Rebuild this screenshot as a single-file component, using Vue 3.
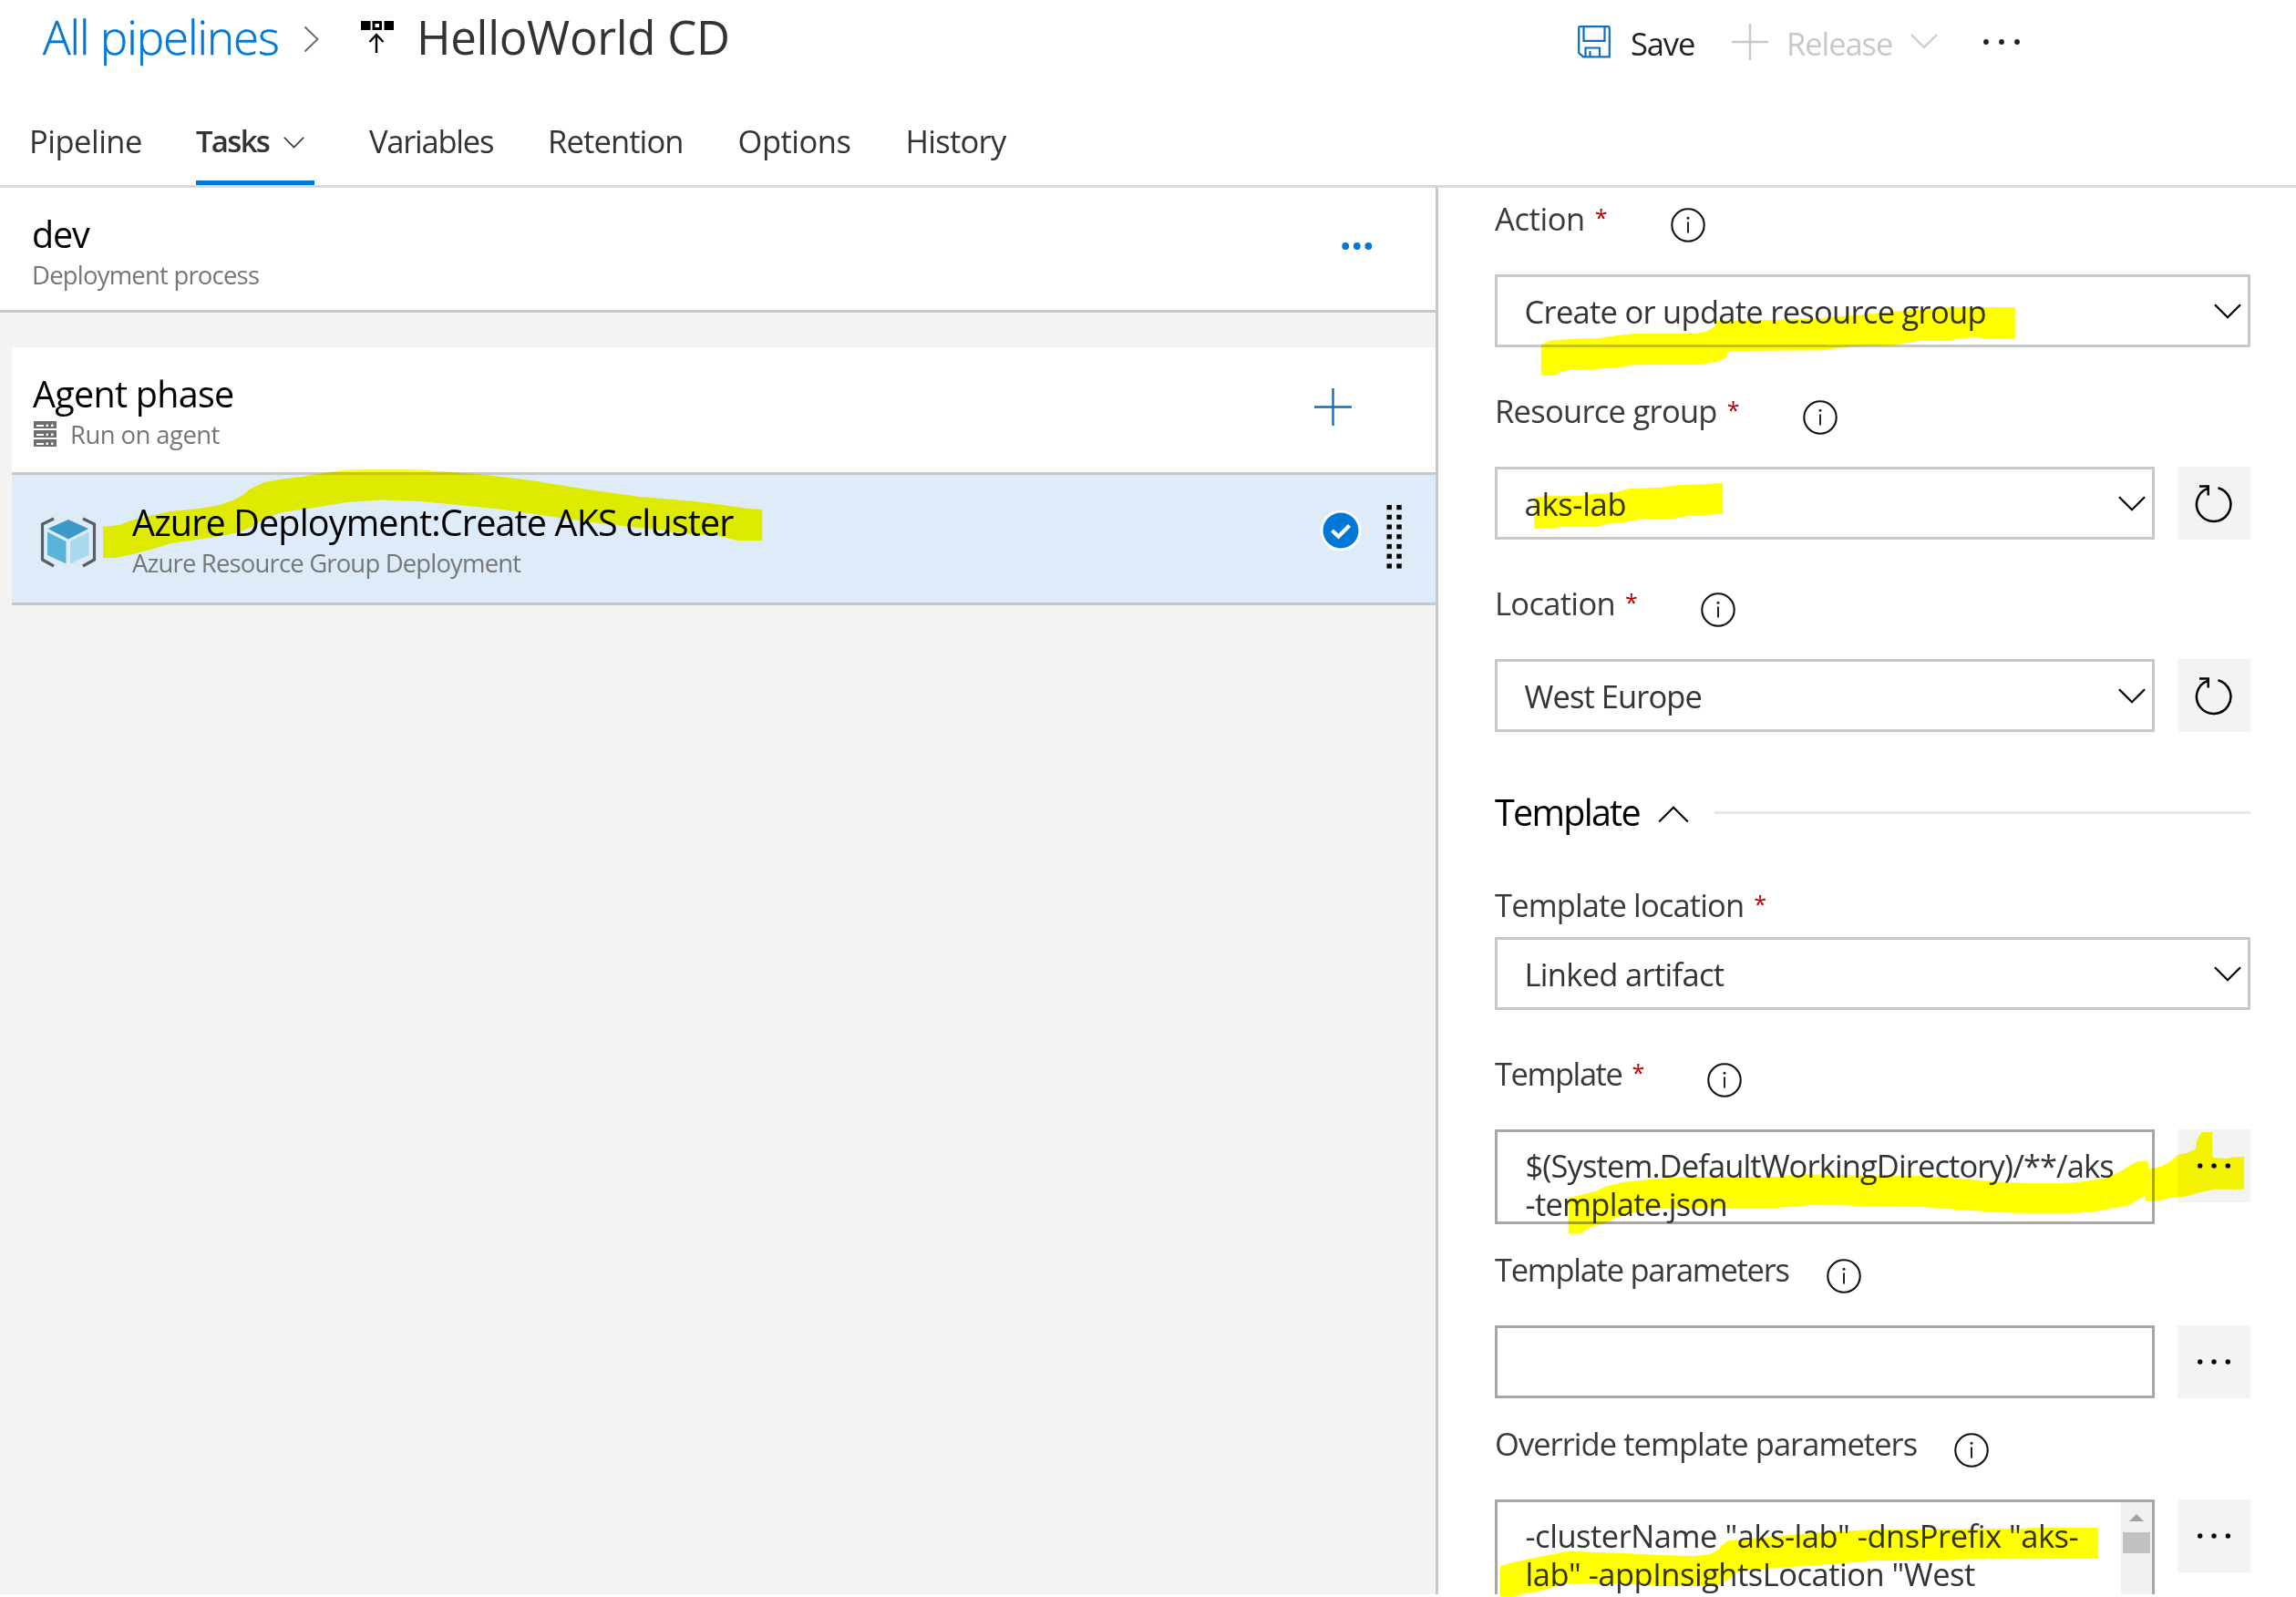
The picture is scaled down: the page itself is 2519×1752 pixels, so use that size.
<script setup>
const tabs = [
  { label: 'Pipeline', ls: -0.5 },
  { label: 'Tasks', ls: -1.7, active: true },
  { label: 'Variables', ls: -1.24 },
  { label: 'Retention', ls: -0.88 },
  { label: 'Options', ls: -0.5 },
  { label: 'History', ls: -0.7 },
]

const inputs = [
  { label: 'Action', ls: -0.42, required: true, info: true, kind: 'select', value: 'Create or update resource group', vls: -0.72, space: 95 },
  { label: 'Resource group', ls: -0.72, required: true, info: true, kind: 'select', value: 'aks-lab', vls: -0.29, action: 'refresh', space: 131 },
  { label: 'Location', ls: -0.68, required: true, info: true, kind: 'select', value: 'West Europe', vls: -0.92, action: 'refresh', space: 131 },
]

const templateInputs = [
  { label: 'Template location', ls: -0.87, required: true, tight: true, kind: 'select', value: 'Linked artifact', vls: -0.7, space: 60 },
  { label: 'Template', ls: -1.45, required: true, info: true, kind: 'text', lines: [['$(System.DefaultWorkingDirectory)/**/aks', -0.9], ['-template.json', -0.72]], action: 'more', space: 131 },
  { label: 'Template parameters', ls: -1.28, info: true, kind: 'text', lines: [], action: 'more', space: 111 },
  { label: 'Override template parameters', ls: -0.96, info: true, kind: 'text', scroll: true, lines: [['-clusterName "aks-lab" -dnsPrefix "aks-', -0.48], ['lab" -appInsightsLocation "West', -0.5]], action: 'more', space: 111 },
]

const groups = [
  { id: 'general', fields: inputs },
  { id: 'template', title: 'Template', fields: templateInputs },
]
</script>

<template>
  <div class="page">
    <header class="top">
      <div class="titlebar">
        <div class="crumbs">
          <a class="root">All pipelines</a>
          <svg class="sep" width="18" height="30" viewBox="0 0 18 30"><path d="M1.5 1.5 L15.5 15 L1.5 28.5" fill="none" stroke="#666" stroke-width="1.8" /></svg>
          <svg class="release-icon" width="36" height="36" viewBox="0 0 36 36">
            <path d="M0 0h10.500v10H0zM25.500 0h10.500v10H25.500z" />
            <path d="M14 1.500h7.500v7H14z" fill="none" stroke="#000" stroke-width="3" />
            <path d="M17 35V15.500M9.500 23l7.500-8 7.500 8" fill="none" stroke="#000" stroke-width="2.400" />
          </svg>
          <span class="name">HelloWorld CD</span>
        </div>
        <div class="commands">
          <svg class="save-icon" width="36" height="36" viewBox="0 0 36 36" fill="none" stroke="#106ebe" stroke-width="2.200">
            <path d="M2.500 1.200H33.500Q34.800 1.200 34.800 2.500V34.300H6L1.200 30V2.500Q1.200 1.200 2.500 1.200Z" />
            <path d="M6.500 1.500V16.800H29.500V1.500M8.500 34.500V24.500H24V34.500M13.500 34V28" />
          </svg>
          <span class="save">Save</span>
          <svg class="plus" width="40" height="40" viewBox="0 0 40 40"><path d="M20 0V40M0 20H40" stroke="#c8c8c8" stroke-width="2.400" /></svg>
          <span class="release">Release</span>
          <svg class="down" width="30" height="17" viewBox="0 0 30 17"><path d="M1 1L15 15L29 1" fill="none" stroke="#c8c8c8" stroke-width="2" /></svg>
          <svg class="dots" width="42" height="8" viewBox="0 0 42 8" fill="#222"><circle cx="4" cy="4" r="2.900" /><circle cx="21" cy="4" r="2.900" /><circle cx="38" cy="4" r="2.900" /></svg>
        </div>
      </div>
      <nav class="tabs">
        <div v-for="t in tabs" :key="t.label" class="tab" :class="{ active: t.active }">
          <span :style="{ letterSpacing: t.ls + 'px' }">{{ t.label }}</span>
          <svg v-if="t.active" width="23" height="13" viewBox="0 0 23 13"><path d="M.8 .8L11.5 11.5L22.2 .8" fill="none" stroke="#333" stroke-width="1.6" /></svg>
        </div>
      </nav>
    </header>

    <main class="work">
      <section class="left">
        <div class="process">
          <div class="text">
            <div class="h dev">dev</div>
            <div class="s proc">Deployment process</div>
          </div>
          <svg class="more" width="34" height="8" viewBox="0 0 34 8" fill="#0078d7"><circle cx="4.200" cy="4" r="3.900" /><circle cx="16.800" cy="4" r="3.900" /><circle cx="29.300" cy="4" r="3.900" /></svg>
        </div>
        <div class="cards">
          <div class="phase">
            <div class="text">
              <div class="h agent">Agent phase</div>
              <div class="s run">
                <svg width="25" height="28" viewBox="0 0 25 28">
                  <g v-for="y in [0, 10, 20]" :key="y"><path :d="`M0 ${y}h25v8H0z`" fill="#6e6e6e" /><path :d="`M3 ${y + 4}h8v2H3zM13.5 ${y + 3.5}h2.5v2.5h-2.5zM19 ${y + 3.5}h2.5v2.5H19z`" fill="#fff" /></g>
                </svg>
                <span>Run on agent</span>
              </div>
            </div>
            <svg class="add" width="41" height="41" viewBox="0 0 41 41"><path d="M20.500 0V41M0 20.500H41" stroke="#106ebe" stroke-width="2.400" /></svg>
          </div>
          <div class="task">
            <svg class="cube" width="62" height="56" viewBox="0 0 62 56">
              <path d="M15 2L2.500 8V47L15 54M47 2L59.500 8V47L47 54" fill="none" stroke="#5a5f66" stroke-width="3.200" />
              <path d="M31 3L53 13L31 24.500L8.500 13z" fill="#3d99c8" />
              <path d="M8 16.500L28.500 27V51.500L8 42z" fill="#59b4d9" />
              <path d="M53.500 16.500L33 27V51.500L53.500 42z" fill="#a9d9ee" />
            </svg>
            <div class="text">
              <div class="h azure">Azure Deployment:Create AKS cluster</div>
              <div class="s group">Azure Resource Group Deployment</div>
            </div>
            <svg class="check" width="46" height="46" viewBox="0 0 46 46"><circle cx="23" cy="23" r="22.500" fill="#fff" /><circle cx="23" cy="23" r="19.500" fill="#0078d7" /><path d="M13.500 23L20.500 29.500L32.500 17.500" fill="none" stroke="#fff" stroke-width="4.200" /></svg>
            <svg class="grip" width="18" height="70" viewBox="0 0 18 70">
              <g v-for="n in 7" :key="n"><rect x=".5" :y="(n - 1) * 10.73" width="5.400" height="5.200" /><rect x="11.300" :y="(n - 1) * 10.73" width="5.400" height="5.200" /></g>
            </svg>
          </div>
        </div>
      </section>

      <section class="right">
        <template v-for="g in groups" :key="g.id">
          <div v-if="g.title" class="group-head">
            <span>{{ g.title }}</span>
            <svg width="34" height="19" viewBox="0 0 34 19"><path d="M1.200 17.500L17 1.800L32.800 17.500" fill="none" stroke="#000" stroke-width="2.200" /></svg>
            <i class="rule"></i>
          </div>
          <div v-for="f in g.fields" :key="f.label" class="field">
            <div class="label" :class="{ tight: f.tight }" :style="{ height: f.space + 'px' }">
              <span class="name" :style="{ letterSpacing: f.ls + 'px' }">{{ f.label }}</span>
              <span v-if="f.required" class="star">*</span>
              <svg v-if="f.info" class="info" :class="{ near: !f.required }" width="38" height="38" viewBox="0 0 38 38"><circle cx="19" cy="19" r="17.700" fill="none" stroke="#111" stroke-width="2.100" /><path d="M19 15.500V27.500" stroke="#222" stroke-width="2" /><circle cx="19" cy="11.300" r="1.500" fill="#222" /></svg>
            </div>
            <div class="control">
              <div v-if="f.kind === 'select'" class="box select">
                <span :style="{ letterSpacing: f.vls + 'px' }">{{ f.value }}</span>
                <svg width="30" height="17" viewBox="0 0 30 17"><path d="M1 1.200L15 15.200L29 1.200" fill="none" stroke="#000" stroke-width="2.300" /></svg>
              </div>
              <div v-else class="box area" :class="{ tall: f.lines.length, scroll: f.scroll }">
                <div class="lines"><div v-for="[line, ls] in f.lines" :key="line" :style="{ letterSpacing: ls + 'px' }">{{ line }}</div></div>
                <div v-if="f.scroll" class="bar"><i class="arrow"></i><i class="thumb"></i></div>
              </div>
              <div v-if="f.action" class="btn">
                <svg v-if="f.action === 'refresh'" width="42" height="44" viewBox="0 0 42 44" fill="none" stroke="#000" stroke-width="2.500"><path d="M25.500 4.200A18.700 18.700 0 1 1 14 4.800M5 2.500H14.700V12.500" /></svg>
                <svg v-else class="ell" width="38" height="8" viewBox="0 0 38 8"><circle cx="3.700" cy="4" r="2.700" /><circle cx="19" cy="4" r="2.700" /><circle cx="34.300" cy="4" r="2.700" /></svg>
              </div>
            </div>
          </div>
        </template>
      </section>
    </main>

    <!-- highlighter strokes laid over the page -->
    <svg class="marker" width="2519" height="1752" viewBox="0 0 2519 1752" fill="#ff0">
      <path transform="translate(0 200) scale(.5357 .3333)" d="M211 1133L245 1128 268 1113 349 1083 410 1073 450 1062 480 1045 500 1027 511 1010 540 988 575 977 615 970 650 960 700 948 740 944H835L910 952 1000 964 1090 982 1200 1010 1310 1035 1400 1047 1450 1055 1530 1073 1561 1077V1179H1510L1470 1163 1410 1157 1340 1142 1240 1125 1120 1098 1030 1077 940 1062 860 1050 780 1045 710 1053 640 1072 580 1085 545 1103 520 1130 490 1152 440 1168 350 1188 310 1208 270 1225 235 1236H211Z" />
      <path transform="translate(1600 200) scale(.5861 .3333)" d="M155 535L170 522 182 519 208 516 265 512 300 503 330 498 447 497 465 490 480 475 481 455 600 453 680 447 720 440 780 432 830 423 890 417 920 411H1042V514H985L965 510 935 514 920 521 860 522 825 533 810 537 735 540 680 553 505 555 502 575 485 590 455 599 325 601 305 608 250 616 208 618 195 622 180 635H155Z" />
      <path transform="translate(1600 200) scale(.5861 .3333)" d="M142 1038L165 1032H230L255 1024H285L320 1008 380 1004 410 997 470 992 495 990V1091L430 1098 405 1106 340 1109 310 1119 275 1125 262 1133H195L170 1139H142Z" />
      <path transform="translate(1600 940) scale(.5861 .3333)" d="M206 1123L230 1112 258 1100 275 1085 310 1070 370 1060 420 1053H590L650 1045 720 1047 760 1050H860L900 1053 960 1063 1020 1070 1060 1074H1140L1180 1066 1210 1058 1240 1035 1258 1015 1272 1002H1291L1292 1026 1315 1020 1335 1000 1345 982 1365 974 1380 962 1382 935 1387 918 1392 906H1411L1412 990 1435 993 1452 988 1471 987V1094H1415L1390 1103 1360 1118 1340 1120 1310 1132 1287 1133 1285 1115 1270 1130 1255 1147 1200 1165 1160 1172H1040L940 1162 870 1152 770 1150 720 1147 660 1146 590 1156H450L380 1158 330 1170 295 1187 270 1208 245 1220 229 1239H206Z" />
      <path transform="translate(1600 1360) scale(.5861 .3333)" d="M78 1075L100 1063 140 1048 200 1027 215 1026 300 1031 380 1038 440 1041 470 1035 485 1022 497 1000 505 990 540 987 600 975 680 963 770 955 900 952 1060 950 1080 948H1198V1050L968 1051 860 1055 770 1057 720 1065 620 1078 540 1087 520 1095 505 1120 490 1135 440 1139H380L320 1133 240 1130 205 1132 185 1140 150 1158 125 1163 105 1175H78Z" />
    </svg>
  </div>
</template>

<style>
body { background: #fff; overflow: hidden; }
</style>
<style scoped>
* { box-sizing: border-box; }
.page { position: relative; width: 2519px; height: 1752px; overflow: hidden; font-family: "Open Sans", sans-serif; font-size: 34.5px; color: #333; white-space: pre; background: #fff; }
svg { display: block; flex: none; }
.top { height: 206px; border-bottom: 3px solid #d9d9d9; }
.titlebar { display: flex; height: 93px; }
.crumbs { display: flex; width: 1731px; padding-left: 47px; font-size: 51px; line-height: 80px; }
.root { color: #0078d7; font-weight: 300; letter-spacing: -1.03px; width: 286px; -webkit-text-stroke: .5px #0078d7; }
.sep { margin-top: 28px; }
.release-icon { margin: 23px 0 0 45px; }
.crumbs .name { letter-spacing: -.31px; margin-left: 25px; }
.commands { display: flex; line-height: 95px; }
.save-icon { margin-top: 28px; }
.save { width: 111px; margin-left: 22px; letter-spacing: -1.11px; color: #222; }
.plus { margin-top: 26px; }
.release { margin-left: 20px; letter-spacing: -1.06px; color: #c8c8c8; width: 136px; }
.down { margin-top: 37px; }
.dots { margin: 42px 0 0 49px; }
.tabs { display: flex; gap: 60px; padding-left: 32px; }
.tab { display: flex; height: 110px; line-height: 123px; }
.tab.active { width: 130px; margin-left: -1px; font-size: 33px; font-weight: 600; border-bottom: 5px solid #0078d7; }
.tab.active svg { margin: 57px 11px 0 auto; }
.work { display: flex; height: 1543px; }
.left { width: 1578px; flex: none; background: #f3f3f3; border-right: 3px solid #c8c8c8; }
.process { display: flex; height: 137px; background: #fff; border-bottom: 3px solid #c8c8c8; padding: 24px 0 0 35px; }
.text { flex: none; }
.h { font-size: 39.5px; line-height: 54px; color: #000; }
.s { font-size: 27.5px; line-height: 36px; color: #767676; }
.dev { letter-spacing: -1.17px; }
.proc { letter-spacing: -.8px; }
.process .more { margin: 36px 69px 0 auto; }
.cards { margin: 38px 0 0 13px; }
.phase, .task { display: flex; border-bottom: 3px solid #c8c8c8; }
.phase { height: 140px; background: #fff; padding: 24px 0 0 23px; }
.agent { letter-spacing: -.73px; }
.run { display: flex; letter-spacing: -.58px; }
.run svg { margin: 3px 15px 0 1px; }
.add { margin: 21px 92px 0 auto; }
.task { height: 143px; background: #deebf8; padding: 25px 36px 0 31px; }
.cube { margin: 21px 39px 0 0; }
.azure { letter-spacing: -.85px; }
.group { letter-spacing: -.85px; }
.check { margin: 12.5px 0 0 auto; }
.grip { margin: 8px 0 0 27px; }
.right { width: 829px; margin-left: 62px; flex: none; overflow: hidden; }
.label { display: flex; align-items: flex-end; line-height: 46px; color: #3a3a3a; }
.label .name { margin-bottom: 38px; }
.label.tight .name { margin-bottom: 12px; }
.star { width: 13px; margin: 0 0 40px 11px; font-size: 25px; color: #b00; }
.tight .star { margin-bottom: 14px; }
.info { margin: 0 0 35px 70px; }
.info.near { margin-left: 41px; }
.control { display: flex; gap: 25px; align-items: flex-start; }
.box { flex: 1; display: flex; border: 3px solid #c8c8c8; }
.select { height: 80px; line-height: 76px; padding-left: 29.5px; }
.select svg { margin: 29px 7px 0 auto; }
.area { border-color: #a6a6a6; height: 80px; }
.area.tall { height: 104px; }
.area.scroll { height: 200px; }
.lines { flex: 1; padding: 15.5px 0 0 30.5px; line-height: 42px; }
.btn { width: 80px; height: 80px; background: #f3f3f3; display: flex; justify-content: center; }
.btn svg { margin-top: 19px; }
.btn .ell { margin-top: 36px; }
.bar { width: 34px; background: #f1f1f1; display: flex; flex-direction: column; align-items: center; }
.arrow { margin-top: 13px; border: 8.5px solid transparent; border-top: 0; border-bottom: 8px solid #a3a3a3; }
.thumb { margin-top: 12px; width: 30px; height: 23px; background: #c1c1c1; }
.group-head { display: flex; height: 165px; padding-top: 62px; font-size: 39.5px; line-height: 53px; letter-spacing: -1.75px; color: #000; }
.group-head svg { margin: 19px 28px 0 20px; }
.rule { flex: 1; height: 3px; margin-top: 25px; background: #e8e8e8; }
.marker { position: absolute; left: 0; top: 0; mix-blend-mode: multiply; pointer-events: none; }
</style>
